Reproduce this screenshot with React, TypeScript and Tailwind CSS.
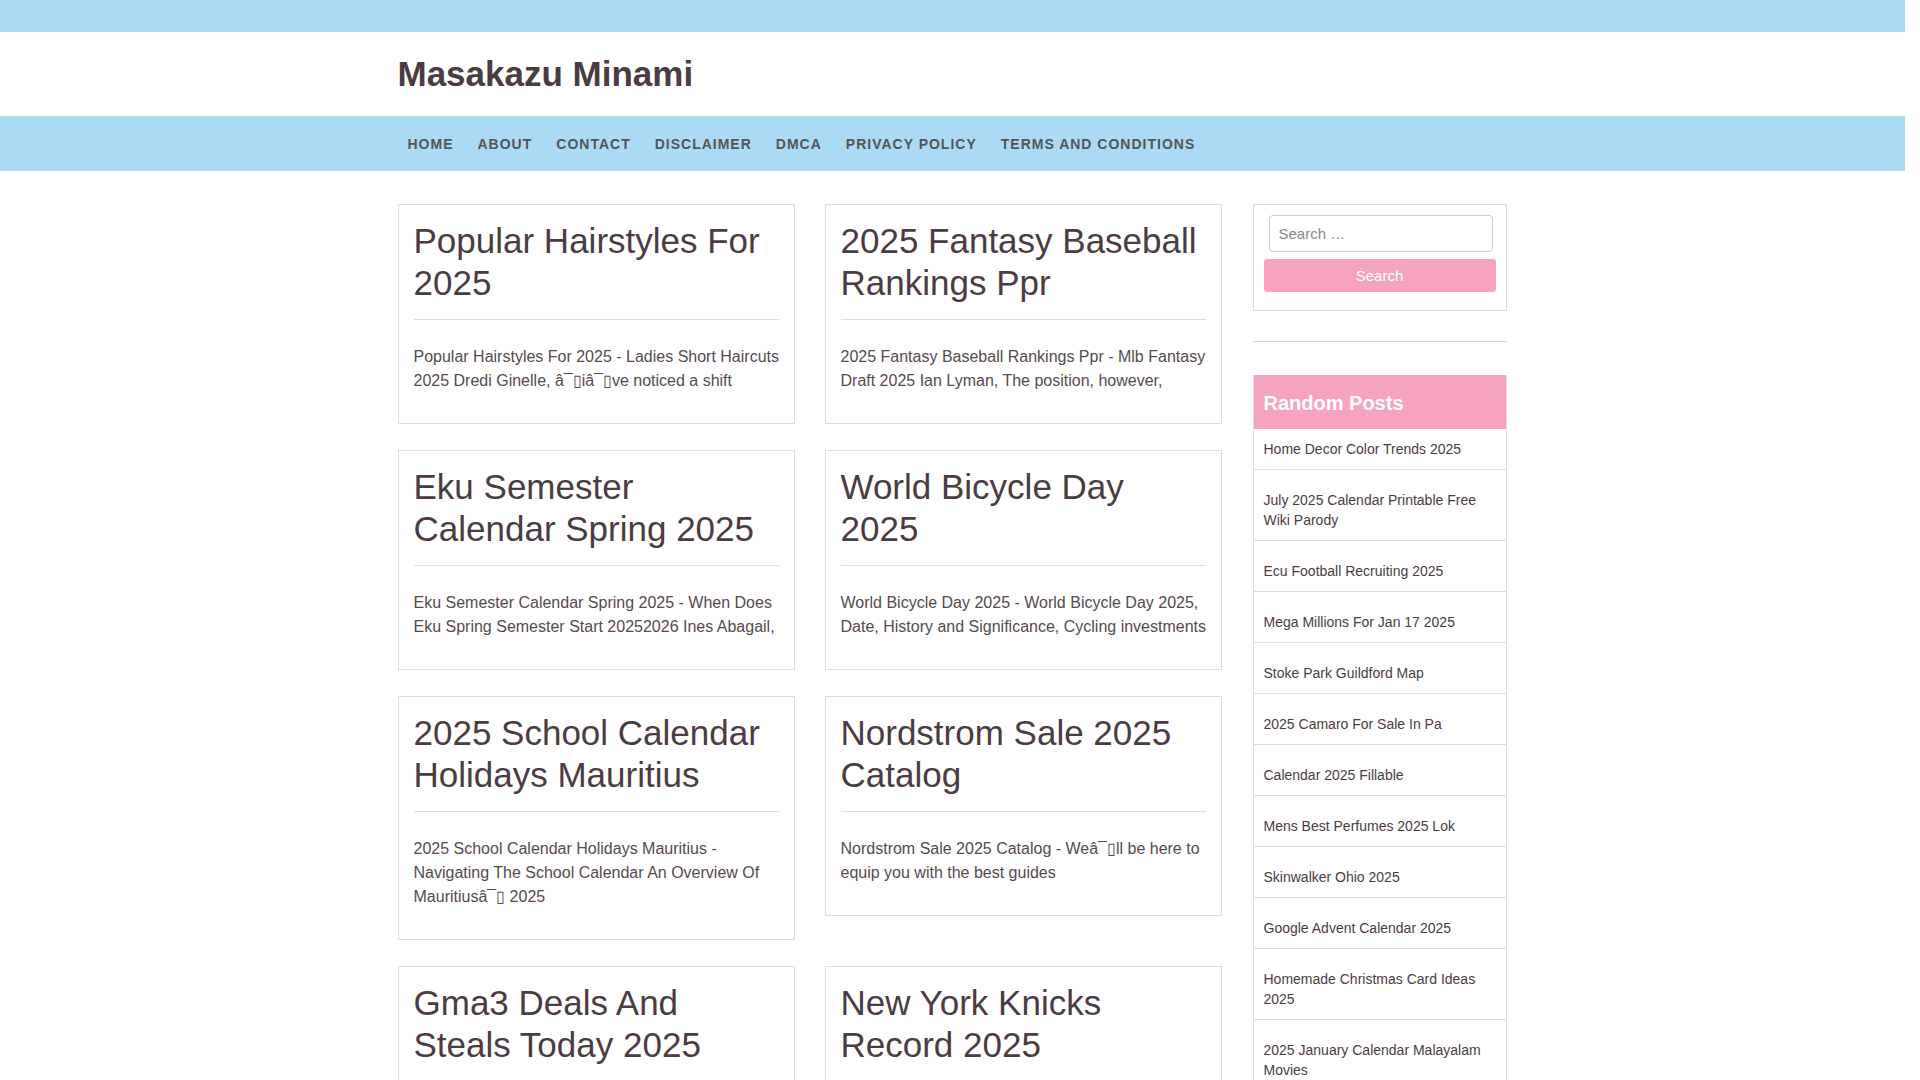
const navItems = ["Home", "About", "Contact", "Disclaimer", "DMCA", "Privacy Policy", "Terms and Conditions"];

// broken apostrophe as shown on the site
const q = "\u00e2\u00af\u25af";

const posts = [
  {
    title: "Popular Hairstyles For 2025",
    excerpt: `Popular Hairstyles For 2025 - Ladies Short Haircuts 2025 Dredi Ginelle, ${q}i${q}ve noticed a shift`,
  },
  {
    title: "2025 Fantasy Baseball Rankings Ppr",
    excerpt: "2025 Fantasy Baseball Rankings Ppr - Mlb Fantasy Draft 2025 Ian Lyman, The position, however,",
  },
  {
    title: "Eku Semester Calendar Spring 2025",
    excerpt: "Eku Semester Calendar Spring 2025 - When Does Eku Spring Semester Start 20252026 Ines Abagail,",
  },
  {
    title: "World Bicycle Day 2025",
    excerpt: "World Bicycle Day 2025 - World Bicycle Day 2025, Date, History and Significance, Cycling investments",
  },
  {
    title: "2025 School Calendar Holidays Mauritius",
    excerpt: `2025 School Calendar Holidays Mauritius - Navigating The School Calendar An Overview Of Mauritius${q} 2025`,
  },
  {
    title: "Nordstrom Sale 2025 Catalog",
    excerpt: `Nordstrom Sale 2025 Catalog - We${q}ll be here to equip you with the best guides`,
  },
  {
    title: "Gma3 Deals And Steals Today 2025",
    excerpt: "Gma3 Deals And Steals Today 2025 - Gma3 Deals And Steals Today 2025, Check out the latest deals",
  },
  {
    title: "New York Knicks Record 2025",
    excerpt: "New York Knicks Record 2025 - New York Knicks Schedule 2025 and results of the season",
  },
];

const randomPosts = [
  "Home Decor Color Trends 2025",
  "July 2025 Calendar Printable Free Wiki Parody",
  "Ecu Football Recruiting 2025",
  "Mega Millions For Jan 17 2025",
  "Stoke Park Guildford Map",
  "2025 Camaro For Sale In Pa",
  "Calendar 2025 Fillable",
  "Mens Best Perfumes 2025 Lok",
  "Skinwalker Ohio 2025",
  "Google Advent Calendar 2025",
  "Homemade Christmas Card Ideas 2025",
  "2025 January Calendar Malayalam Movies",
  "Best Rated Suv For 2025",
];

function PostCard({ title, excerpt }: { title: string; excerpt: string }) {
  return (
    <article className="border border-[#dddddd] px-[15px] pt-[15px] pb-[30px]">
      <h2 className="text-[35px] leading-[42px] text-[#4b3c42] font-normal">{title}</h2>
      <hr className="mt-[15px] border-0 border-t border-[#dddddd]" />
      <p className="mt-[25px] -mr-[4px] text-[16px] leading-[24px] text-[#564a4f]">{excerpt}</p>
    </article>
  );
}

export default function App() {
  return (
    <div className="min-h-screen bg-white pr-[15px] font-['Liberation_Sans',Arial,sans-serif] text-[#4b3c42]">
      <div className="h-[32px] bg-[#acdaf4]" />

      <header className="h-[84px]">
        <div className="max-w-[1110px] mx-auto h-full flex items-center">
          <h1 className="-mt-[2px] text-[35px] leading-[43px] font-bold text-[#4b3c42]">Masakazu Minami</h1>
        </div>
      </header>

      <nav className="h-[55px] bg-[#acdaf4]">
        <div className="max-w-[1110px] mx-auto h-full">
          <ul className="-ml-[2px] h-full flex items-center pt-[1px]">
            {navItems.map((item) => (
              <li key={item}>
                <a href="#" className="block px-[12px] text-[14px] font-bold uppercase tracking-[1px] text-[#555555]">
                  {item}
                </a>
              </li>
            ))}
          </ul>
        </div>
      </nav>

      <div className="max-w-[1110px] mx-auto pt-[33px] pb-[40px] flex gap-[31px] items-start">
        <main className="w-[824px] grid grid-cols-2 gap-x-[30px] gap-y-[26px] items-start">
          {posts.map((p) => (
            <PostCard key={p.title} title={p.title} excerpt={p.excerpt} />
          ))}
        </main>

        <aside className="w-[254px]">
          <div className="border border-[#dddddd] px-[10px] pt-[10px] pb-[18px]">
            <input
              type="search"
              placeholder="Search …"
              className="block mx-[5px] w-[224px] h-[37px] rounded-[4px] border border-[#cccccc] px-[9px] text-[15px] text-[#555] placeholder:text-[#8a8a8a] outline-none"
            />
            <button className="mt-[7px] w-full h-[33px] rounded-[3px] bg-[#f5a3bf] text-white text-[15px] pt-[1px]">
              Search
            </button>
          </div>

          <hr className="mt-[30px] border-0 border-t border-[#cccccc]" />

          <section className="mt-[33px] border-x border-b border-[#dddddd]">
            <h3 className="h-[54px] bg-[#f5a3bf] px-[10px] pt-[2px] flex items-center text-[20px] font-bold text-white">
              Random Posts
            </h3>
            <ul>
              {randomPosts.map((t, i) => (
                <li
                  key={t}
                  className={
                    i === 0
                      ? "px-[10px] pt-[10px] pb-[10px] border-b border-[#dddddd]"
                      : "px-[10px] pt-[20px] pb-[10px] border-b border-[#dddddd]"
                  }
                >
                  <a href="#" className="block text-[14px] leading-[20px] text-[#4b3c42]">
                    {t}
                  </a>
                </li>
              ))}
            </ul>
          </section>
        </aside>
      </div>
    </div>
  );
}
